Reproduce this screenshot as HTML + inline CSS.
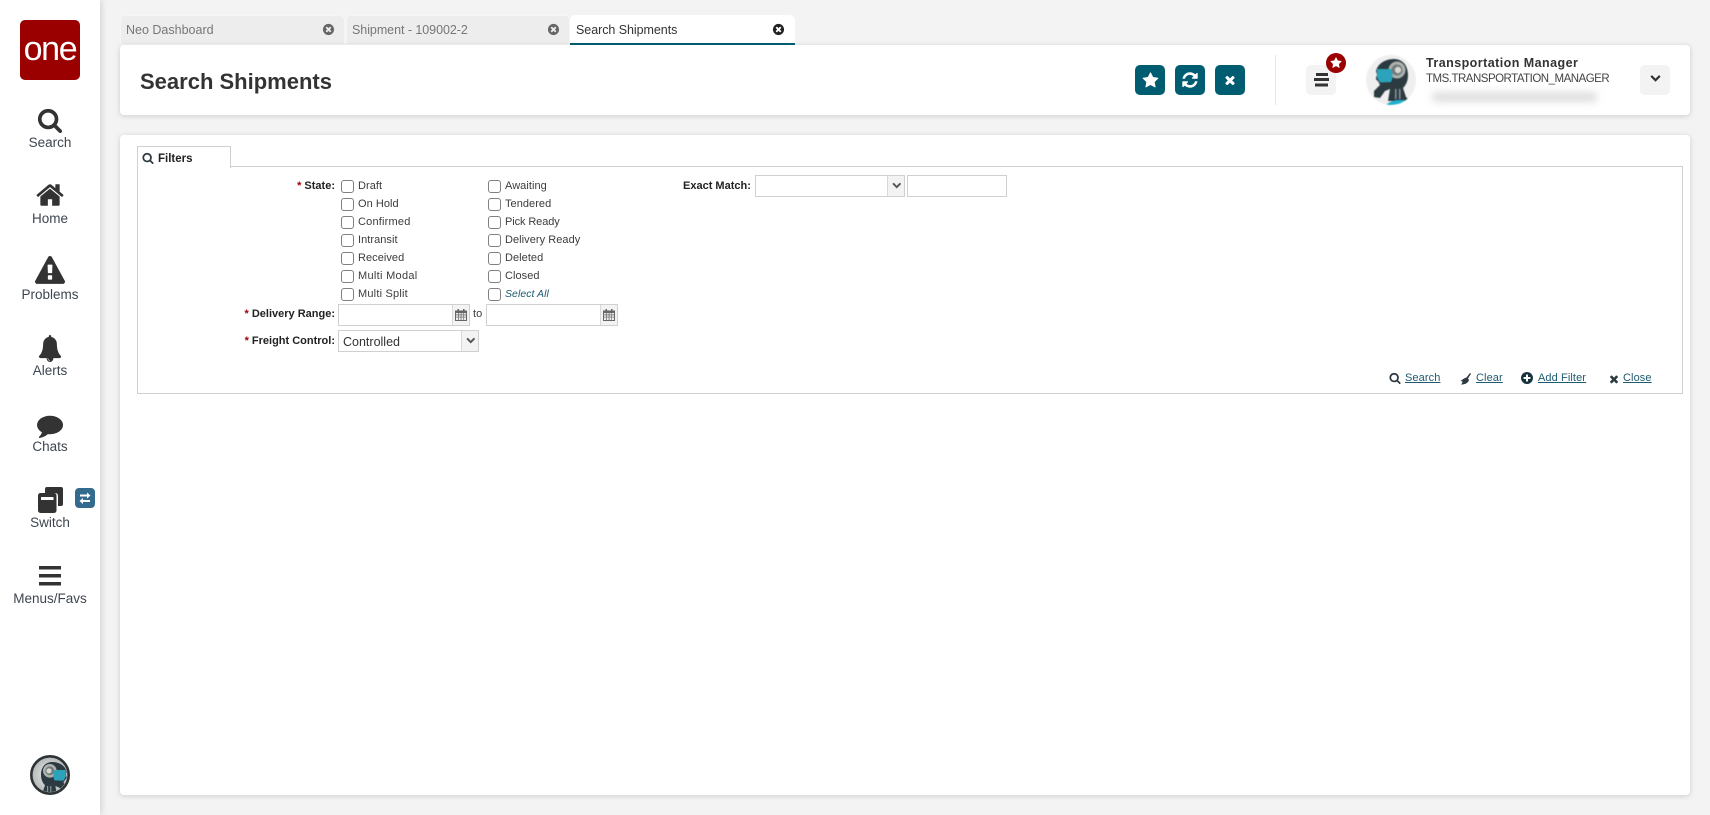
<!DOCTYPE html>
<html><head><meta charset="utf-8"><title>Search Shipments</title>
<style>
html,body{margin:0;padding:0;width:1710px;height:815px;overflow:hidden;background:#f3f3f3;font-family:"Liberation Sans",sans-serif;color:#333}
.a{position:absolute}
.t{position:absolute;white-space:nowrap;line-height:16px}
svg{position:absolute;display:block}
#side{left:0;top:0;width:100px;height:815px;background:#fff;box-shadow:2px 0 6px rgba(0,0,0,.12)}
.nl{position:absolute;left:0;width:100px;text-align:center;font-size:13.5px;line-height:16px;color:#3d4650}
.tab{position:absolute;top:15px;height:30px;background:#eeeded;border-radius:5px 5px 0 0;box-shadow:inset 0 0 0 1px #f6f6f6;font-size:12.5px;line-height:31px;color:#777;box-sizing:border-box;padding-left:6px}
.card{position:absolute;background:#fff;border-radius:4px;box-shadow:0 1px 6px rgba(0,0,0,.16)}
.btn{position:absolute;width:30px;height:30px;top:65px;background:#005c70;border-radius:5px}
.gbtn{position:absolute;width:30px;height:30px;top:65px;background:#f3f3f3;border-radius:5px}
.cb{position:absolute;width:11px;height:11px;border:1px solid #808080;border-radius:3px;background:#fff}
.l{position:absolute;font-size:11px;line-height:14px;color:#3c3c3c;white-space:nowrap;letter-spacing:.05px}
.b{position:absolute;font-size:11px;line-height:14px;font-weight:bold;color:#222;white-space:nowrap}
.b i{color:#a00000;font-style:normal}
.inp{position:absolute;height:20px;border:1px solid #d0d0d0;background:#fff}
.addon{position:absolute;top:0;right:0;height:20px;background:#f3f3f3;border-left:1px solid #d8d8d8}
.lnk{position:absolute;top:371px;font-size:11px;line-height:14px;color:#1e5a70;text-decoration:underline;white-space:nowrap;letter-spacing:.1px}
</style></head><body>
<svg width="0" height="0" style="position:absolute">
<defs>
<clipPath id="cc"><circle cx="25" cy="25" r="25"/></clipPath>
<symbol id="search" viewBox="0 0 1792 1792"><path d="M1216 832q0-185-131.5-316.5t-316.5-131.5-316.5 131.5-131.5 316.5 131.5 316.5 316.5 131.5 316.5-131.5 131.5-316.5zm512 832q0 52-38 90t-90 38q-54 0-90-38l-343-342q-179 124-399 124-143 0-273.5-55.5t-225-150-150-225-55.5-273.5 55.5-273.5 150-225 225-150 273.5-55.5 273.5 55.5 225 150 150 225 55.5 273.5q0 220-124 399l343 343q37 37 37 90z"/></symbol>
<symbol id="home" viewBox="0 0 1792 1792"><path d="M1472 992v480q0 26-19 45t-45 19h-384v-384h-256v384h-384q-26 0-45-19t-19-45v-480q0-1 .5-3t.5-3l575-474 575 474q1 2 1 6zm223-69l-62 74q-8 9-21 11h-3q-13 0-21-7l-692-577-692 577q-12 8-24 7-13-2-21-11l-62-74q-8-10-7-23.5t11-21.5l719-599q32-26 76-26t76 26l244 204v-195q0-14 9-23t23-9h192q14 0 23 9t9 23v408l219 182q10 8 11 21.5t-7 23.5z"/></symbol>
<symbol id="warn" viewBox="0 0 1792 1792"><path d="M1024 1375v-190q0-14-9.5-23.5t-22.5-9.5h-192q-13 0-22.5 9.5t-9.5 23.5v190q0 14 9.5 23.5t22.5 9.5h192q13 0 22.5-9.5t9.5-23.5zm-2-374l18-459q0-12-10-19-13-11-24-11h-220q-11 0-24 11-10 7-10 21l17 457q0 10 10 16.5t24 6.5h185q14 0 23.5-6.5t10.5-16.5zm-14-934l768 1408q35 63-2 126-17 29-46.5 46t-63.5 17h-1536q-34 0-63.5-17t-46.5-46q-37-63-2-126l768-1408q17-31 47-49t65-18 65 18 47 49z"/></symbol>
<symbol id="bell" viewBox="0 0 1792 1792" preserveAspectRatio="none"><path d="M912 1696q0-16-16-16-59 0-101.5-42.5t-42.5-101.5q0-16-16-16t-16 16q0 73 51.5 124.5t124.5 51.5q16 0 16-16zm816-288q0 52-38 90t-90 38h-448q0 106-75 181t-181 75-181-75-75-181h-448q-52 0-90-38t-38-90q50-42 91-88t85-119.5 74.5-158.5 50-206 19.5-260q0-152 117-282.5t307-158.5q-8-19-8-39 0-40 28-68t68-28 68 28 28 68q0 20-8 39 190 28 307 158.5t117 282.5q0 139 19.5 260t50 206 74.5 158.5 85 119.5 91 88z"/></symbol>
<symbol id="chat" viewBox="0 0 1792 1792"><path d="M1792 896q0 174-120 321.5t-326 233-450 85.5q-70 0-145-8-198 175-460 242-49 14-114 22-17 2-30.5-9t-17.5-29v-1q-3-4-.5-12t2-10 4.5-9.5l6-9 7-8.5 8-9q7-8 31-34.5t34.5-38 31-39.5 32.5-51 27-59 26-76q-157-89-247.5-220t-90.5-281q0-130 71-248.5t191-204.5 286-136.5 348-50.5q244 0 450 85.5t326 233 120 321.5z"/></symbol>
<symbol id="star" viewBox="0 0 1792 1792"><path d="M1728 647q0 22-26 48l-363 354 86 500q1 7 1 20 0 21-10.5 35.5t-30.5 14.5q-19 0-40-12l-449-236-449 236q-22 12-40 12-21 0-31.5-14.5t-10.5-35.5q0-6 2-20l86-500-364-354q-25-27-25-48 0-37 56-46l502-73 225-455q19-41 49-41t49 41l225 455 502 73q56 9 56 46z"/></symbol>
<symbol id="refresh" viewBox="0 0 1792 1792"><path d="M1639 1056q0 5-1 7-64 268-268 434.5t-478 166.5q-146 0-282.5-55t-243.5-157l-129 129q-19 19-45 19t-45-19-19-45v-448q0-26 19-45t45-19h448q26 0 45 19t19 45-19 45l-137 137q71 66 161 102t187 36q134 0 250-65t186-179q11-17 53-117 8-23 30-23h192q13 0 22.5 9.5t9.5 22.5zm25-800v448q0 26-19 45t-45 19h-448q-26 0-45-19t-19-45 19-45l138-138q-148-137-349-137-134 0-250 65t-186 179q-11 17-53 117-8 23-30 23h-199q-13 0-22.5-9.5t-9.5-22.5v-7q65-268 270-434.5t480-166.5q146 0 284 55.5t245 156.5l130-129q19-19 45-19t45 19 19 45z"/></symbol>
<symbol id="times" viewBox="0 0 1792 1792"><path d="M1490 1322q0 40-28 68l-136 136q-28 28-68 28t-68-28l-294-294-294 294q-28 28-68 28t-68-28l-136-136q-28-28-28-68t28-68l294-294-294-294q-28-28-28-68t28-68l136-136q28-28 68-28t68 28l294 294 294-294q28-28 68-28t68 28l136 136q28 28 28 68t-28 68l-294 294 294 294q28 28 28 68z"/></symbol>
<symbol id="plusc" viewBox="0 0 1792 1792"><path d="M1344 960v-128q0-26-19-45t-45-19h-256v-256q0-26-19-45t-45-19h-128q-26 0-45 19t-19 45v256h-256q-26 0-45 19t-19 45v128q0 26 19 45t45 19h256v256q0 26 19 45t45 19h128q26 0 45-19t19-45v-256h256q26 0 45-19t19-45zm320-64q0 209-103 385.5t-279.5 279.5-385.5 103-385.5-103-279.5-279.5-103-385.5 103-385.5 279.5-279.5 385.5-103 385.5 103 279.5 279.5 103 385.5z"/></symbol>
<symbol id="timesc" viewBox="0 0 1792 1792"><path d="M1277 1122q0-26-19-45l-181-181 181-181q19-19 19-45 0-27-19-46l-90-90q-19-19-46-19-26 0-45 19l-181 181-181-181q-19-19-45-19-27 0-46 19l-90 90q-19 19-19 46 0 26 19 45l181 181-181 181q-19 19-19 45 0 27 19 46l90 90q19 19 46 19 26 0 45-19l181-181 181 181q19 19 45 19 27 0 46-19l90-90q19-19 19-46zm387-226q0 209-103 385.5t-279.5 279.5-385.5 103-385.5-103-279.5-279.5-103-385.5 103-385.5 279.5-279.5 385.5-103 385.5 103 279.5 279.5 103 385.5z"/></symbol>
<symbol id="chev" viewBox="0 0 1792 1792"><path d="M1683 808l-742 741q-19 19-45 19t-45-19l-742-741q-19-19-19-45.5t19-45.5l166-165q19-19 45-19t45 19l531 531 531-531q19-19 45-19t45 19l166 165q19 19 19 45.5t-19 45.5z"/></symbol>
<symbol id="cal" viewBox="0 0 12 12"><path fill="#666" d="M0 1.500h12V12H0z"/><path fill="#ececec" d="M1 4h2v1.500H1zM3.700 4h2v1.500h-2zM6.400 4h2v1.500h-2zM9 4h2v1.500H9zM1 6.200h2v1.500H1zM3.700 6.200h2v1.500h-2zM6.400 6.200h2v1.500h-2zM9 6.200h2v1.500H9zM1 8.400h2V11H1zM3.700 8.400h2V11h-2zM6.400 8.400h2V11h-2zM9 8.400h2V11H9z"/><path fill="#666" d="M2.500 0H4v2H2.500zM8 0h1.500v2H8z"/></symbol>
<symbol id="robot" viewBox="0 0 50 50">
<path fill="#2c3b42" d="M10 16C12 8 20 4 28 4c9 0 14 7 14 16 0 6-2 10-5 13l3 9 4 4H22l2-12-5 2-5 7-6-1v-6l6-6-2-4c-3-1-2-4-1-6z"/>
<circle cx="31" cy="15" r="8.500" fill="#aeb2ac"/><circle cx="31" cy="15" r="5.500" fill="#6f7a7a"/><circle cx="32" cy="15" r="3.200" fill="#d8d8d0"/>
<path fill="#2ba3ba" d="M11 14h14c2 3 2 10 0 13l-11 .5-3-5z"/>
<path fill="#8d9597" d="M29 34h1.500v10H29zM33 34h1.500v10H33z"/>
<path fill="#1fb0cc" d="M20 50c3-3 8-5 13-5h5c2 1 3 3 4 5z"/>
</symbol>
</defs></svg>

<div id="side" class="a"></div>
<div class="a" style="left:20px;top:20px;width:60px;height:60px;background:#9a0000;border-radius:5px"></div>
<div class="t" style="left:20px;top:29px;width:60px;text-align:center;font-size:34px;line-height:40px;letter-spacing:-1.300px;color:#fff">one</div>

<svg style="left:37px;top:107px" width="26" height="26" fill="#333"><use href="#search"/></svg>
<div class="nl" style="top:135px">Search</div>
<svg style="left:35px;top:180px" width="30" height="30" fill="#333"><use href="#home"/></svg>
<div class="nl" style="top:211px">Home</div>
<svg style="left:35px;top:256px" width="30" height="30" fill="#333"><use href="#warn"/></svg>
<div class="nl" style="top:287px">Problems</div>
<svg style="left:38px;top:335px" width="24" height="27" fill="#333"><use href="#bell" width="24" height="27"/></svg>
<div class="nl" style="top:363px">Alerts</div>
<svg style="left:37px;top:412px" width="26" height="26" fill="#333"><use href="#chat"/></svg>
<div class="nl" style="top:439px">Chats</div>
<svg style="left:37px;top:486px" width="27" height="28"><path fill="#333" d="M8 3q0-2 2-2h14q2 0 2 2v15q0 2-2 2h-3V10q0-3-3-3H8z"/><rect x="1" y="7" width="18.500" height="20" rx="2.500" fill="#333"/><rect x="4" y="11" width="12.500" height="3" fill="#fff"/></svg>
<div class="a" style="left:75px;top:488px;width:20px;height:20px;background:#336b8e;border-radius:4px"></div>
<svg style="left:75px;top:488px" width="20" height="20" fill="#fff"><path d="M5 6.500h7v-2l3.500 3-3.500 3v-2H5zM15 12H8v-2l-3.500 3L8 16v-2h7z"/></svg>
<div class="nl" style="top:515px">Switch</div>
<svg style="left:39px;top:566px" width="22" height="20" fill="#333"><rect y="0" width="22" height="3.500"/><rect y="8" width="22" height="3.500"/><rect y="16" width="22" height="3.500"/></svg>
<div class="nl" style="top:591px">Menus/Favs</div>

<svg style="left:30px;top:755px;filter:blur(.35px)" width="40" height="40"><defs><radialGradient id="rg"><stop offset="0" stop-color="#f0f0f0"/><stop offset="1" stop-color="#b4b6b6"/></radialGradient><clipPath id="c2"><circle cx="20" cy="20" r="17"/></clipPath></defs><circle cx="20" cy="20" r="18.700" fill="url(#rg)" stroke="#2c3336" stroke-width="2.600"/><g clip-path="url(#c2)"><g transform="translate(44.600 3.800) scale(-.8 .8)"><use href="#robot" width="50" height="50"/></g></g></svg>

<!-- Tabs -->
<div class="tab" style="left:120px;width:225px">Neo Dashboard
<svg style="left:202px;top:8px" width="13" height="13" fill="#666"><use href="#timesc"/></svg></div>
<div class="tab" style="left:346px;width:224px;letter-spacing:-.05px">Shipment - 109002-2
<svg style="left:201px;top:8px" width="13" height="13" fill="#666"><use href="#timesc"/></svg></div>
<div class="tab" style="left:570px;width:225px;background:#fff;color:#333;box-shadow:none;letter-spacing:-.05px">Search Shipments
<svg style="left:202px;top:8px" width="13" height="13" fill="#222"><use href="#timesc"/></svg></div>

<!-- Header -->
<div class="card" style="left:120px;top:45px;width:1570px;height:70px"></div>
<div class="a" style="left:570px;top:43px;width:225px;height:2px;background:#005c70"></div>
<div class="t" style="left:140px;top:68px;font-size:22px;line-height:28px;font-weight:bold;color:#333">Search Shipments</div>

<div class="btn" style="left:1135px"><svg style="left:6.500px;top:6.500px" width="17" height="17" fill="#fff"><use href="#star"/></svg></div>
<div class="btn" style="left:1175px"><svg style="left:6px;top:6px" width="18" height="18" fill="#fff"><use href="#refresh"/></svg></div>
<div class="btn" style="left:1215px"><svg style="left:8px;top:8px" width="14" height="14" fill="#fff"><use href="#times"/></svg></div>
<div class="a" style="left:1275px;top:55px;width:1px;height:50px;background:#e6e6e6"></div>
<div class="gbtn" style="left:1306px"><svg style="left:8px;top:8px" width="15" height="14" fill="#333"><rect x="2" y="0" width="12" height="3"/><rect x="0" y="5" width="15" height="3"/><rect x="1" y="10.500" width="13" height="3"/></svg></div>
<div class="a" style="left:1326px;top:53px;width:20px;height:20px;border-radius:50%;background:#9a0000"></div>
<svg style="left:1330px;top:57px" width="12" height="12" fill="#fff"><use href="#star"/></svg>
<svg style="left:1366px;top:55px;filter:blur(.5px)" width="50" height="50"><circle cx="25" cy="25" r="25" fill="#efefef"/><g clip-path="url(#cc)"><use href="#robot" width="50" height="50"/></g></svg>
<div class="t" style="left:1426px;top:55px;font-size:12.500px;font-weight:bold;color:#333;letter-spacing:.45px">Transportation Manager</div>
<div class="t" style="left:1426px;top:71px;font-size:11.500px;color:#444;letter-spacing:-.5px">TMS.TRANSPORTATION_MANAGER</div>
<div class="a" style="left:1432px;top:92px;width:165px;height:10px;background:#dedede;filter:blur(4px);border-radius:4px"></div>
<div class="gbtn" style="left:1640px"><svg style="left:9.500px;top:7px" width="11" height="11" fill="#333"><use href="#chev"/></svg></div>

<!-- Main -->
<div class="card" style="left:120px;top:135px;width:1570px;height:660px"></div>
<div class="a" style="left:137px;top:166px;width:1544px;height:226px;border:1px solid #d0d0d0"></div>
<div class="a" style="left:137px;top:146px;width:92px;height:21px;border:1px solid #d0d0d0;border-bottom:0;background:#fff"></div>
<svg style="left:142px;top:152px" width="12" height="12" fill="#2d3a40"><use href="#search"/></svg>
<div class="b" style="left:158px;top:152px;font-size:11.500px">Filters</div>

<div class="b" style="right:1375px;top:179px"><i>*</i> State:</div>
<div class="b" style="right:1375px;top:307px"><i>*</i> Delivery Range:</div>
<div class="b" style="right:1375px;top:334px"><i>*</i> Freight Control:</div>
<div class="b" style="left:683px;top:179px">Exact Match:</div>

<div class="cb" style="left:341px;top:180px"></div><div class="l" style="left:358px;top:179px">Draft</div>
<div class="cb" style="left:341px;top:198px"></div><div class="l" style="left:358px;top:197px">On Hold</div>
<div class="cb" style="left:341px;top:216px"></div><div class="l" style="left:358px;top:215px;letter-spacing:.2px">Confirmed</div>
<div class="cb" style="left:341px;top:234px"></div><div class="l" style="left:358px;top:233px">Intransit</div>
<div class="cb" style="left:341px;top:252px"></div><div class="l" style="left:358px;top:251px">Received</div>
<div class="cb" style="left:341px;top:270px"></div><div class="l" style="left:358px;top:269px;letter-spacing:.3px">Multi Modal</div>
<div class="cb" style="left:341px;top:288px"></div><div class="l" style="left:358px;top:287px;letter-spacing:.2px">Multi Split</div>

<div class="cb" style="left:488px;top:180px"></div><div class="l" style="left:505px;top:179px">Awaiting</div>
<div class="cb" style="left:488px;top:198px"></div><div class="l" style="left:505px;top:197px">Tendered</div>
<div class="cb" style="left:488px;top:216px"></div><div class="l" style="left:505px;top:215px;letter-spacing:-.1px">Pick Ready</div>
<div class="cb" style="left:488px;top:234px"></div><div class="l" style="left:505px;top:233px">Delivery Ready</div>
<div class="cb" style="left:488px;top:252px"></div><div class="l" style="left:505px;top:251px">Deleted</div>
<div class="cb" style="left:488px;top:270px"></div><div class="l" style="left:505px;top:269px">Closed</div>
<div class="cb" style="left:488px;top:288px"></div><div class="l" style="left:505px;top:287px;font-style:italic;color:#1e5a70;font-size:10.500px">Select All</div>

<div class="inp" style="left:338px;top:304px;width:130px"><div class="addon" style="width:16px"><svg style="left:2px;top:4px" width="12" height="12"><use href="#cal"/></svg></div></div>
<div class="l" style="left:473px;top:307px">to</div>
<div class="inp" style="left:486px;top:304px;width:130px"><div class="addon" style="width:16px"><svg style="left:2px;top:4px" width="12" height="12"><use href="#cal"/></svg></div></div>
<div class="inp" style="left:338px;top:330px;width:139px"><div class="t" style="left:4px;top:3px;font-size:12.500px;color:#333">Controlled</div><div class="addon" style="width:16px"><svg style="left:3.500px;top:4px" width="9.500" height="9.500" fill="#555"><use href="#chev"/></svg></div></div>
<div class="inp" style="left:755px;top:175px;width:148px"><div class="addon" style="width:16px"><svg style="left:3.500px;top:4px" width="9.500" height="9.500" fill="#555"><use href="#chev"/></svg></div></div>
<div class="inp" style="left:907px;top:175px;width:98px"></div>

<svg style="left:1389px;top:372px" width="12" height="12" fill="#2d3a40"><use href="#search"/></svg>
<div class="lnk" style="left:1405px">Search</div>
<svg style="left:1459px;top:372px" width="13" height="13" fill="#2d3a40"><path d="M7.500 5.500 11 1l1 .8-3 4.700 1 1.500c-1 3-3.500 4.500-8 4.500 1-1 1.500-2 1.500-3l-2-.5C3 8 5 6 7.500 5.500z"/></svg>
<div class="lnk" style="left:1476px">Clear</div>
<svg style="left:1520px;top:371px" width="14" height="14" fill="#16323f"><use href="#plusc"/></svg>
<div class="lnk" style="left:1538px">Add Filter</div>
<svg style="left:1608px;top:373px" width="12" height="12" fill="#2d3a40"><use href="#times"/></svg>
<div class="lnk" style="left:1623px">Close</div>
</body></html>
